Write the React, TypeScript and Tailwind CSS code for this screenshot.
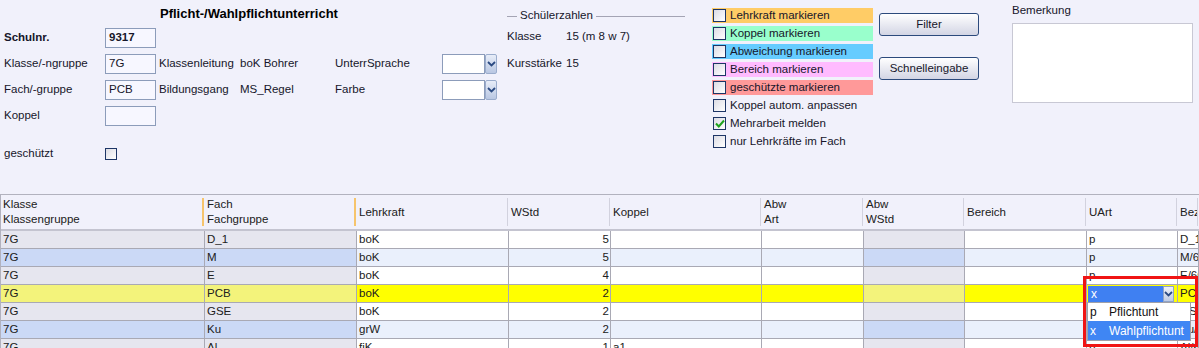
import React from "react";

type Tone = "a" | "b" | "y";

const FIXED: Record<Tone, string> = {
  a: "bg-[#e6e6ef]",
  b: "bg-[#cbd9f6]",
  y: "bg-[#f3f37b]",
};
const EDIT: Record<Tone, string> = {
  a: "bg-white",
  b: "bg-[#eaf0fc]",
  y: "bg-[#ffff00]",
};

const ROWS = [
  { k: "7G", f: "D_1", l: "boK", w: "5", kop: "", u: "p", b: "D_1/6G", tone: "a" as Tone },
  { k: "7G", f: "M", l: "boK", w: "5", kop: "", u: "p", b: "M/6G", tone: "b" as Tone },
  { k: "7G", f: "E", l: "boK", w: "4", kop: "", u: "p", b: "E/6G", tone: "a" as Tone },
  { k: "7G", f: "PCB", l: "boK", w: "2", kop: "", u: "x", b: "PCB/6G", tone: "y" as Tone },
  { k: "7G", f: "GSE", l: "boK", w: "2", kop: "", u: "p", b: "GSE/6G", tone: "a" as Tone },
  { k: "7G", f: "Ku", l: "grW", w: "2", kop: "", u: "p", b: "Ku/6G", tone: "b" as Tone },
  { k: "7G", f: "Al", l: "fiK", w: "1", kop: "a1", u: "p", b: "Al/6G", tone: "a" as Tone },
];

const COLS = "grid grid-cols-[204px_152px_152px_102px_151px_102px_101px_122px_91px_1fr]";

const Chevron = () => (
  <svg width="9" height="6" viewBox="0 0 9 6">
    <path d="M1 1 L4.5 4.5 L8 1" fill="none" stroke="#2b4a82" strokeWidth="1.8" />
  </svg>
);

const Box = ({ value, bold }: { value?: string; bold?: boolean }) => (
  <div
    className={`w-[51px] h-[20px] border border-[#8c9cba] bg-[#f7f7ff] px-[3px] flex items-center ${
      bold ? "font-bold" : ""
    }`}
  >
    {value}
  </div>
);

const Combo = () => (
  <div className="flex h-[20px] w-[55px]">
    <div className="w-[43px] h-full border border-[#8c9cba] bg-white" />
    <div className="w-[12px] h-full rounded-[2px] border border-[#9aaccc] bg-gradient-to-b from-[#e8edf8] to-[#b9c7e2] flex items-center justify-center">
      <Chevron />
    </div>
  </div>
);

const Check = ({ checked }: { checked?: boolean }) => (
  <div className="w-[13px] h-[13px] shrink-0 border border-[#1d3566] bg-gradient-to-br from-[#dcdce4] to-white flex items-center justify-center">
    {checked && (
      <svg width="10" height="9" viewBox="0 0 10 9">
        <path d="M1 4.5 L3.8 7.5 L9 1.5" fill="none" stroke="#1ea21e" strokeWidth="2" />
      </svg>
    )}
  </div>
);

const OPTIONS: { label: string; bg: string; checked?: boolean }[] = [
  { label: "Lehrkraft markieren", bg: "bg-[#ffcc66]" },
  { label: "Koppel markieren", bg: "bg-[#99ffcc]" },
  { label: "Abweichung markieren", bg: "bg-[#66ccff]" },
  { label: "Bereich markieren", bg: "bg-[#ffbbff]" },
  { label: "geschützte markieren", bg: "bg-[#ff9999]" },
  { label: "Koppel autom. anpassen", bg: "" },
  { label: "Mehrarbeit melden", bg: "", checked: true },
  { label: "nur Lehrkräfte im Fach", bg: "" },
];

const HeadCell = ({ lines, orange }: { lines: string[]; orange?: boolean }) => (
  <div className="flex h-[34px] overflow-hidden">
    <div className="flex-1 flex flex-col justify-center pl-[2px] leading-[15px] whitespace-nowrap overflow-hidden">
      {lines.map((t) => (
        <div key={t}>{t}</div>
      ))}
    </div>
    {orange ? (
      <div className="w-[2px] my-[3px] mr-[1px] bg-[#f6c46c]" />
    ) : (
      <div className="w-[1px] my-[3px] mr-[1px] bg-[#d2d2de]" />
    )}
  </div>
);

const Cell = ({
  children,
  bg,
  right,
}: {
  children?: React.ReactNode;
  bg: string;
  right?: boolean;
}) => (
  <div
    className={`h-[18px] border-r border-b border-[#a9a9b4] ${bg} flex items-center whitespace-nowrap overflow-hidden ${
      right ? "justify-end pr-[1px]" : "pl-[2px]"
    }`}
  >
    {children}
  </div>
);

export default function App() {
  return (
    <div className="relative w-[1199px] h-[348px] overflow-hidden bg-[#f1f1fb] text-[#16162a] text-[11.5px] font-['Liberation_Sans',Arial,sans-serif]">
      {/* Kopfbereich */}
      <div className="h-[194px] flex">
        <div className="w-[507px] shrink-0 pl-[4px] flex flex-col">
          <div className="h-[28px] pl-[156px] flex items-center font-bold text-[13px] text-black">
            Pflicht-/Wahlpflichtunterricht
          </div>
          <div className="h-[20px] flex items-center">
            <span className="w-[101px] font-bold">Schulnr.</span>
            <Box value="9317" bold />
          </div>
          <div className="mt-[6px] h-[20px] flex items-center">
            <span className="w-[101px]">Klasse/-ngruppe</span>
            <Box value="7G" />
            <span className="ml-[3px] w-[81px]">Klassenleitung</span>
            <span className="w-[95px]">boK Bohrer</span>
            <span className="w-[107px]">UnterrSprache</span>
            <Combo />
          </div>
          <div className="mt-[6px] h-[20px] flex items-center">
            <span className="w-[101px]">Fach/-gruppe</span>
            <Box value="PCB" />
            <span className="ml-[3px] w-[81px]">Bildungsgang</span>
            <span className="w-[95px]">MS_Regel</span>
            <span className="w-[107px]">Farbe</span>
            <Combo />
          </div>
          <div className="mt-[6px] h-[20px] flex items-center">
            <span className="w-[101px]">Koppel</span>
            <Box />
          </div>
          <div className="mt-[22px] h-[12px] flex items-center">
            <span className="w-[101px]">geschützt</span>
            <div className="w-[12px] h-[12px] border border-[#1d3566] bg-gradient-to-br from-[#dcdce4] to-white" />
          </div>
        </div>

        <div className="w-[205px] shrink-0 flex flex-col">
          <div className="mt-[8px] h-[16px] flex items-center">
            <div className="w-[10px] h-[1px] bg-[#a4a4b4]" />
            <span className="px-[3px]">Schülerzahlen</span>
            <div className="w-[89px] h-[1px] bg-[#a4a4b4]" />
          </div>
          <div className="mt-[5px] h-[16px] flex items-center">
            <span className="w-[59px]">Klasse</span>
            <span>15 (m 8 w 7)</span>
          </div>
          <div className="mt-[11px] h-[16px] flex items-center">
            <span className="w-[59px]">Kursstärke</span>
            <span>15</span>
          </div>
        </div>

        <div className="w-[161px] shrink-0 pt-[8px] flex flex-col gap-[3px]">
          {OPTIONS.map((o) => (
            <div key={o.label} className={`h-[15px] flex items-center pl-[1px] ${o.bg}`}>
              <Check checked={o.checked} />
              <span className="ml-[4px] whitespace-nowrap">{o.label}</span>
            </div>
          ))}
        </div>

        <div className="ml-[6px] w-[100px] shrink-0 pt-[13px] flex flex-col">
          <button className="h-[23px] rounded-[3px] border border-[#2c4a7c] bg-gradient-to-b from-white to-[#d3d5e4] text-[#16162a]">
            Filter
          </button>
          <button className="mt-[21px] h-[23px] rounded-[3px] border border-[#2c4a7c] bg-gradient-to-b from-white to-[#d3d5e4] text-[#16162a]">
            Schnelleingabe
          </button>
        </div>

        <div className="ml-[33px] w-[181px] shrink-0 pt-[3px] flex flex-col">
          <div className="h-[15px] leading-[15px]">Bemerkung</div>
          <div className="mt-[5px] h-[80px] border border-[#c8c8d4] bg-white" />
        </div>
      </div>

      {/* Tabelle */}
      <div className="border-t border-l border-[#b2b2be] text-[#202020]">
        <div className={`${COLS} border-b-2 border-[#c4c4d0]`}>
          <HeadCell lines={["Klasse", "Klassengruppe"]} orange />
          <HeadCell lines={["Fach", "Fachgruppe"]} orange />
          <HeadCell lines={["Lehrkraft"]} />
          <HeadCell lines={["WStd"]} />
          <HeadCell lines={["Koppel"]} />
          <HeadCell lines={["Abw", "Art"]} />
          <HeadCell lines={["Abw", "WStd"]} />
          <HeadCell lines={["Bereich"]} />
          <HeadCell lines={["UArt"]} />
          <HeadCell lines={["Bezeichnung"]} />
        </div>
        {ROWS.map((r, i) => (
          <div key={i} className={COLS}>
            <Cell bg={FIXED[r.tone]}>{r.k}</Cell>
            <Cell bg={FIXED[r.tone]}>{r.f}</Cell>
            <Cell bg={EDIT[r.tone]}>{r.l}</Cell>
            <Cell bg={EDIT[r.tone]} right>
              {r.w}
            </Cell>
            <Cell bg={EDIT[r.tone]}>{r.kop}</Cell>
            <Cell bg={EDIT[r.tone]} />
            <Cell bg={FIXED[r.tone]} />
            <Cell bg={EDIT[r.tone]} />
            {i === 3 ? (
              <div className="h-[18px] border-r border-b border-[#a9a9b4] bg-[#ffff00] flex items-center pl-[1px] pr-[3px]">
                <div className="flex-1 h-[16px] bg-[#3f80f2] text-white text-[12px] flex items-center pl-[3px]">
                  x
                </div>
                <div className="w-[11px] h-[16px] border border-[#8fa3c8] bg-gradient-to-b from-[#eef1f9] to-[#bfcbe3] flex items-center justify-center">
                  <Chevron />
                </div>
              </div>
            ) : (
              <Cell bg={EDIT[r.tone]}>{r.u}</Cell>
            )}
            <Cell bg={EDIT[r.tone]}>{r.b}</Cell>
          </div>
        ))}
      </div>

      {/* Auswahlliste UArt */}
      <div className="absolute left-[1087px] top-[302px] w-[104px] h-[39px] bg-white border border-[#a0a0a8] flex flex-col text-[12px] text-[#111]">
        <div className="h-[18px] flex items-center">
          <span className="w-[21px] pl-[2px]">p</span>
          <span>Pflichtunt</span>
        </div>
        <div className="h-[19px] flex items-center bg-[#3f86f4] text-white">
          <span className="w-[21px] pl-[2px]">x</span>
          <span>Wahlpflichtunt</span>
        </div>
      </div>
      <div className="absolute left-[1083px] top-[276px] w-[115px] h-[71px] border-[3px] border-[#f01414] pointer-events-none" />
    </div>
  );
}
